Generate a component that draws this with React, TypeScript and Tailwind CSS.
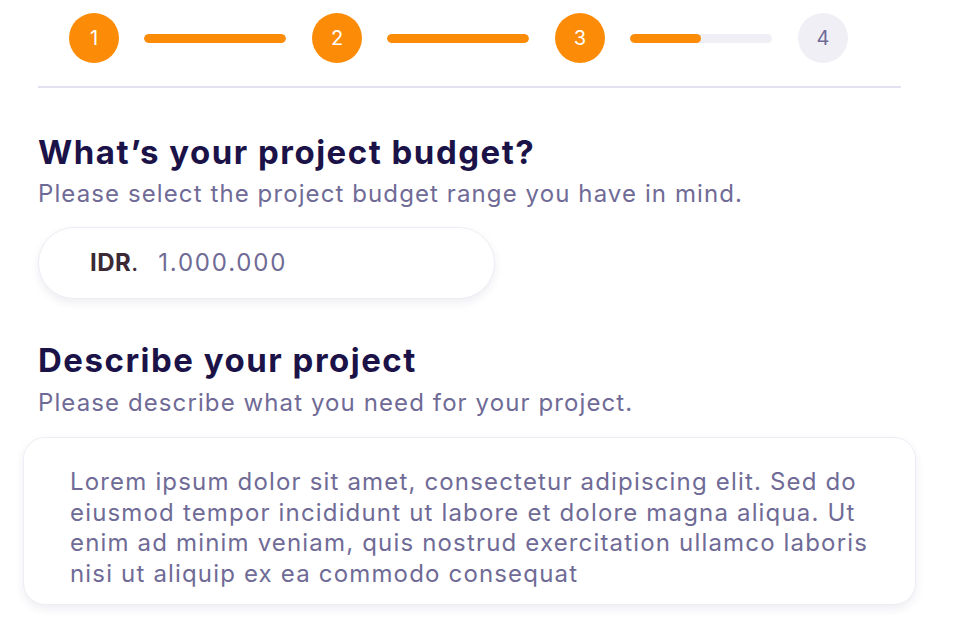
export default function App() {
  return (
    <div className="min-h-[636px] w-[955px] bg-white font-['Inter',sans-serif] text-[#1b1348]">
      <div className="pl-[38px] pt-[13px]">
        <div className="flex items-center pl-[31px]">
          <Step n={1} done />
          <Bar fill="100%" />
          <Step n={2} done />
          <Bar fill="100%" />
          <Step n={3} done />
          <Bar fill="50%" />
          <Step n={4} />
        </div>
        <div className="mt-[23px] h-[2px] w-[863px] bg-[#e2e1ef]" />

        <h2 className="mt-[44px] text-[33px] font-bold leading-[40px] tracking-[1.5px] text-[#1b1348]">
          What’s your project budget?
        </h2>
        <p className="mt-[7px] text-[24px] leading-[30px] tracking-[1.1px] text-[#6f6b96]">
          Please select the project budget range you have in mind.
        </p>
        <div className="mt-[18px] flex h-[72px] w-[457px] items-center rounded-full border border-[#eeedf5] bg-white pl-[51px] shadow-[0_4px_10px_rgba(40,30,90,0.08)]">
          <span className="text-[24px] font-bold tracking-[0.5px] text-[#3b2a35]">IDR</span>
          <span className="text-[24px] text-[#3b2a35]">.</span>
          <span className="ml-[20px] text-[24px] tracking-[1.8px] text-[#6f6b96]">1.000.000</span>
        </div>

        <h2 className="mt-[41px] text-[33px] font-bold leading-[40px] tracking-[1.5px] text-[#1b1348]">
          Describe your project
        </h2>
        <p className="mt-[8px] text-[24px] leading-[30px] tracking-[1.1px] text-[#6f6b96]">
          Please describe what you need for your project.
        </p>
        <div className="-ml-[15px] mt-[19px] w-[893px] rounded-[22px] border border-[#eeedf5] bg-white pb-[15px] pl-[46px] pt-[29px] shadow-[0_4px_10px_rgba(40,30,90,0.08)]">
          <p className="whitespace-nowrap text-[24px] leading-[30.5px] tracking-[1.17px] text-[#6f6b96]">
            Lorem ipsum dolor sit amet, consectetur adipiscing elit. Sed do
            <br />
            eiusmod tempor incididunt ut labore et dolore magna aliqua. Ut
            <br />
            enim ad minim veniam, quis nostrud exercitation ullamco laboris
            <br />
            nisi ut aliquip ex ea commodo consequat
          </p>
        </div>
      </div>
    </div>
  );
}

function Step({ n, done }: { n: number; done?: boolean }) {
  return (
    <div
      className={
        done
          ? "flex h-[50px] w-[50px] shrink-0 items-center justify-center rounded-full bg-[#fc8c07] text-[20px] text-white"
          : "flex h-[50px] w-[50px] shrink-0 items-center justify-center rounded-full bg-[#efeff5] text-[20px] text-[#6f6b96]"
      }
    >
      {n}
    </div>
  );
}

function Bar({ fill }: { fill: string }) {
  return (
    <div className="ml-[25px] mr-[26px] h-[9px] w-[142px] shrink-0 overflow-hidden rounded-full bg-[#efeff5]">
      <div className="h-full rounded-full bg-[#fc8c07]" style={{ width: fill }} />
    </div>
  );
}
